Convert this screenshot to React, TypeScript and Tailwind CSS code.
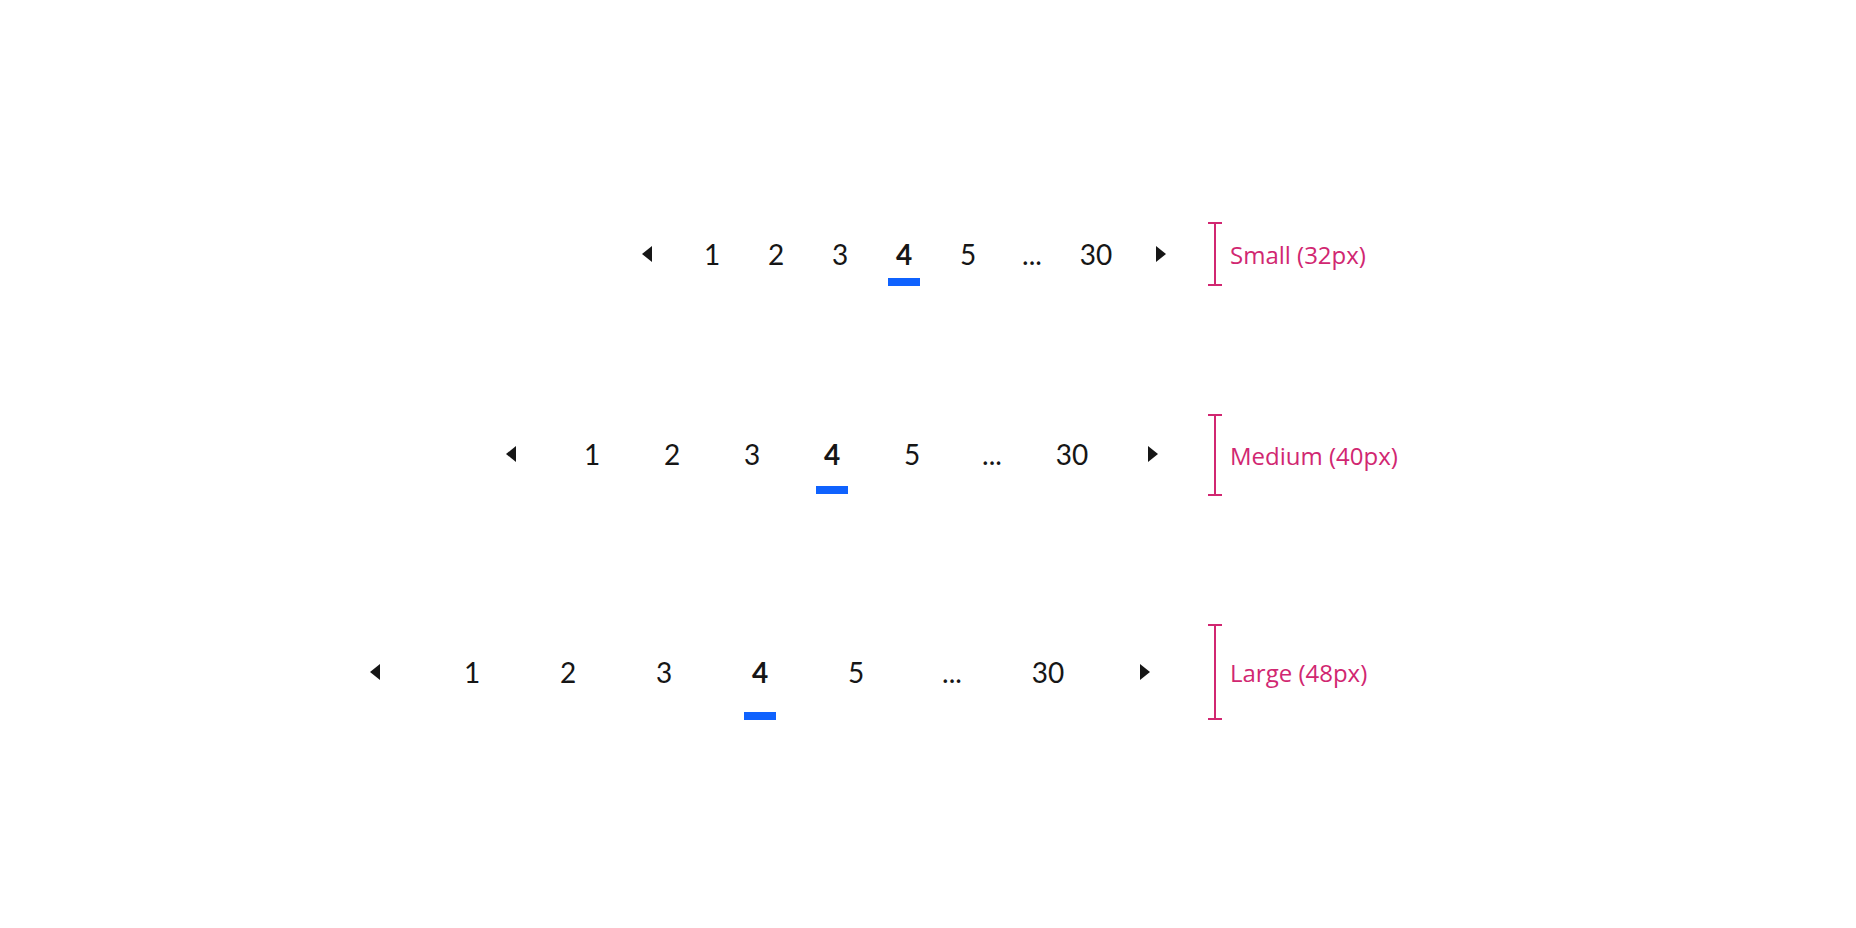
import React, { useState } from 'react';
import clsx from 'clsx';

interface SizeSpec {
    name: string;
    label: string;
    item: string;
    bracket: string;
}

const SIZES: SizeSpec[] = [
    { name: 'small', label: 'Small (32px)', item: 'size-16', bracket: 'h-16' },
    { name: 'medium', label: 'Medium (40px)', item: 'size-20', bracket: 'h-[82px]' },
    { name: 'large', label: 'Large (48px)', item: 'size-24', bracket: 'h-24' },
];

const PAGES = ['1', '2', '3', '4', '5', '...', '30'];

const Caret: React.FC<{ direction: 'left' | 'right' }> = ({ direction }) => (
    <svg className="size-8" viewBox="0 0 32 32" fill="currentColor" aria-hidden="true">
        <path d={direction === 'left' ? 'M20 24 10 16 20 8Z' : 'M12 8 22 16 12 24Z'} />
    </svg>
);

const PaginationNav: React.FC<{ spec: SizeSpec }> = ({ spec }) => {
    const [current, setCurrent] = useState(3);
    const itemClass = clsx('flex shrink-0 cursor-pointer items-center justify-center', spec.item);

    return (
        <nav aria-label={`Pagination ${spec.name}`} className="flex justify-end font-['Lato',sans-serif] text-[28px] leading-8 text-[#161616]">
            <button
                type="button"
                aria-label="Previous page"
                className={itemClass}
                onClick={() => setCurrent(Math.max(0, current - 1))}
            >
                <Caret direction="left" />
            </button>
            {PAGES.map((page, idx) => (
                <button
                    key={page}
                    type="button"
                    aria-current={idx === current ? 'page' : undefined}
                    className={clsx(itemClass, 'relative', idx === current && 'font-bold')}
                    onClick={() => setCurrent(idx)}
                >
                    {page}
                    {idx === current && <span className="absolute bottom-0 h-2 w-8 bg-[#0f62fe]" />}
                </button>
            ))}
            <button
                type="button"
                aria-label="Next page"
                className={itemClass}
                onClick={() => setCurrent(Math.min(PAGES.length - 1, current + 1))}
            >
                <Caret direction="right" />
            </button>
        </nav>
    );
};

// Height marker: a vertical stem with a cap at each end
const Measure: React.FC<{ spec: SizeSpec }> = ({ spec }) => (
    <div className="flex items-center gap-2 pl-4 text-[#d12771]">
        <div className={clsx('flex w-[14px] shrink-0 flex-col items-center', spec.bracket)}>
            <div className="h-[2px] w-full bg-current" />
            <div className="w-[2px] flex-1 bg-current" />
            <div className="h-[2px] w-full bg-current" />
        </div>
        <span className="pt-[2px] font-['Open_Sans',sans-serif] text-2xl leading-8 whitespace-nowrap">{spec.label}</span>
    </div>
);

export default function App() {
    return (
        <main className="flex min-h-screen flex-col gap-32 bg-white pt-[222px] pb-32">
            {SIZES.map((spec) => (
                <section key={spec.name} className="grid grid-cols-[149fr_83fr] items-start">
                    <PaginationNav spec={spec} />
                    <Measure spec={spec} />
                </section>
            ))}
        </main>
    );
}
